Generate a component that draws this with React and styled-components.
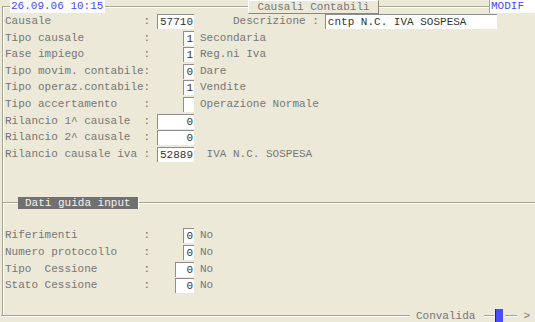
import React from "react";
import styled, { createGlobalStyle } from "styled-components";

const Global = createGlobalStyle`
  html, body { margin: 0; padding: 0; background: #ECE9D8; }
  body { font-family: "Liberation Mono", "DejaVu Sans Mono", monospace; }
`;

const Screen = styled.div`
  position: relative;
  width: 535px;
  height: 322px;
  overflow: hidden;
  background: #ECE9D8;
  font-family: "Liberation Mono", monospace;
  font-size: 11px;
  color: #767676;
`;

const Frame = styled.div`
  position: relative;
  margin: 6px 0 0 2px;
  height: 309px;
  border-top: 1px solid #a7a593;
  border-left: 1px solid #a7a593;
  box-shadow: inset 1px 1px 0 #ffffff;
  padding: 7px 0 0 2px;
  box-sizing: border-box;
`;

const DateTag = styled.div`
  position: absolute;
  top: -7px;
  left: 7px;
  height: 13px;
  line-height: 13px;
  padding: 0 2px 0 1px;
  background: #ffffff;
  color: #4646ff;
`;

const TitleTab = styled.div`
  position: absolute;
  top: -7px;
  left: 245px;
  height: 12px;
  width: 129px;
  line-height: 12px;
  text-align: center;
  background: #ECE9D8;
  border-top: 1px solid #ffffff;
  border-left: 1px solid #ffffff;
  border-right: 1px solid #8a887a;
  border-bottom: 1px solid #8a887a;
  color: #767676;
`;

const ModeTag = styled.div`
  position: absolute;
  top: -7px;
  right: 0;
  height: 13px;
  line-height: 13px;
  width: 46px;
  padding-left: 1px;
  background: #ffffff;
  color: #4646ff;
  border-left: 1px solid #a7a593;
  box-sizing: border-box;
`;

const Rows = styled.div`
  display: flex;
  flex-direction: column;
`;

const Row = styled.div`
  display: grid;
  grid-template-columns: 150px 39px auto;
  align-items: start;
  height: 16.6px;
`;

const Label = styled.span`
  white-space: pre;
  line-height: 15px;
  height: 15px;
`;

const FieldCell = styled.div`
  display: flex;
  justify-content: flex-end;
`;

const Field = styled.div`
  width: ${(p) => p.$w}px;
  height: 15px;
  line-height: 15px;
  background: #ffffff;
  border-top: 1px solid #8e8e8e;
  border-left: 1px solid #8e8e8e;
  box-sizing: border-box;
  text-align: ${(p) => (p.$left ? "left" : "right")};
  padding: 0 1px 0 2px;
  color: #333333;
  white-space: pre;
  overflow: hidden;
`;

const Value = styled.span`
  white-space: pre;
  line-height: 15px;
  padding-left: 6px;
`;

const TopExtra = styled.div`
  display: flex;
  align-items: start;
  padding-left: 39px;
  gap: 6px;
`;

const Section = styled.div`
  position: relative;
  margin: 39px 0 0 -2px;
  height: 2px;
  border-top: 1px solid #a7a593;
  box-shadow: inset 0 1px 0 #ffffff;
`;

const SectionLabel = styled.div`
  position: absolute;
  left: 15px;
  top: -6px;
  padding: 0 7px;
  height: 12px;
  line-height: 12px;
  background: #707070;
  color: #f4f4f4;
  border-right: 1px solid #ffffff;
`;

const Lower = styled.div`
  margin-top: 23px;
`;

const Footer = styled.div`
  position: absolute;
  left: -2px;
  right: 0;
  bottom: -8px;
  display: flex;
  align-items: center;
  justify-content: flex-end;
  height: 14px;
  padding-right: 5px;
`;

const FooterLine = styled.div`
  flex: ${(p) => (p.$grow ? 1 : "none")};
  width: ${(p) => p.$w || 0}px;
  height: 0;
  border-top: 1px solid #a7a593;
  border-bottom: 1px solid #ffffff;
`;

const FooterText = styled.span`
  line-height: 13px;
  margin: 0 ${(p) => p.$r || 0}px 0 ${(p) => p.$l || 0}px;
`;

const Cursor = styled.div`
  width: 8px;
  height: 14px;
  margin: 0 2px 0 1px;
  background: #4a4aff;
  border-left: 1px solid #22228a;
  box-sizing: border-box;
`;

const upper = [
  { label: "Tipo causale         :", w: 11, v: "1", text: "Secondaria" },
  { label: "Fase impiego         :", w: 11, v: "1", text: "Reg.ni Iva" },
  { label: "Tipo movim. contabile:", w: 11, v: "0", text: "Dare" },
  { label: "Tipo operaz.contabile:", w: 11, v: "1", text: "Vendite" },
  { label: "Tipo accertamento    :", w: 11, v: "", text: "Operazione Normale" },
  { label: "Rilancio 1^ causale  :", w: 37, v: "0", text: "" },
  { label: "Rilancio 2^ causale  :", w: 37, v: "0", text: "" },
  { label: "Rilancio causale iva :", w: 37, v: "52889", text: " IVA N.C. SOSPESA" },
];

const lower = [
  { label: "Riferimenti          :", w: 11, v: "0", text: "No" },
  { label: "Numero protocollo    :", w: 11, v: "0", text: "No" },
  { label: "Tipo  Cessione       :", w: 19, v: "0", text: "No" },
  { label: "Stato Cessione       :", w: 19, v: "0", text: "No" },
];

function FormRow({ r }) {
  return (
    <Row>
      <Label>{r.label}</Label>
      <FieldCell>
        <Field $w={r.w}>{r.v}</Field>
      </FieldCell>
      <Value>{r.text}</Value>
    </Row>
  );
}

export default function App() {
  return (
    <>
      <Global />
      <Screen>
        <Frame>
          <DateTag>26.09.06 10:15</DateTag>
          <TitleTab>Causali Contabili</TitleTab>
          <ModeTag>MODIF</ModeTag>
          <Rows>
            <Row>
              <Label>{"Causale              :"}</Label>
              <FieldCell>
                <Field $w={37}>57710</Field>
              </FieldCell>
              <TopExtra>
                <Label>{"Descrizione :"}</Label>
                <Field $w={172} $left>
                  cntp N.C. IVA SOSPESA
                </Field>
              </TopExtra>
            </Row>
            {upper.map((r) => (
              <FormRow key={r.label} r={r} />
            ))}
          </Rows>
          <Section>
            <SectionLabel>Dati guida input</SectionLabel>
          </Section>
          <Lower>
            <Rows>
              {lower.map((r) => (
                <FormRow key={r.label} r={r} />
              ))}
            </Rows>
          </Lower>
          <Footer>
            <FooterLine $grow />
            <FooterText $l={6} $r={9}>Convalida</FooterText>
            <FooterLine $w={10} />
            <Cursor />
            <FooterLine $w={12} />
            <FooterText $l={6}>&gt;</FooterText>
          </Footer>
        </Frame>
      </Screen>
    </>
  );
}
